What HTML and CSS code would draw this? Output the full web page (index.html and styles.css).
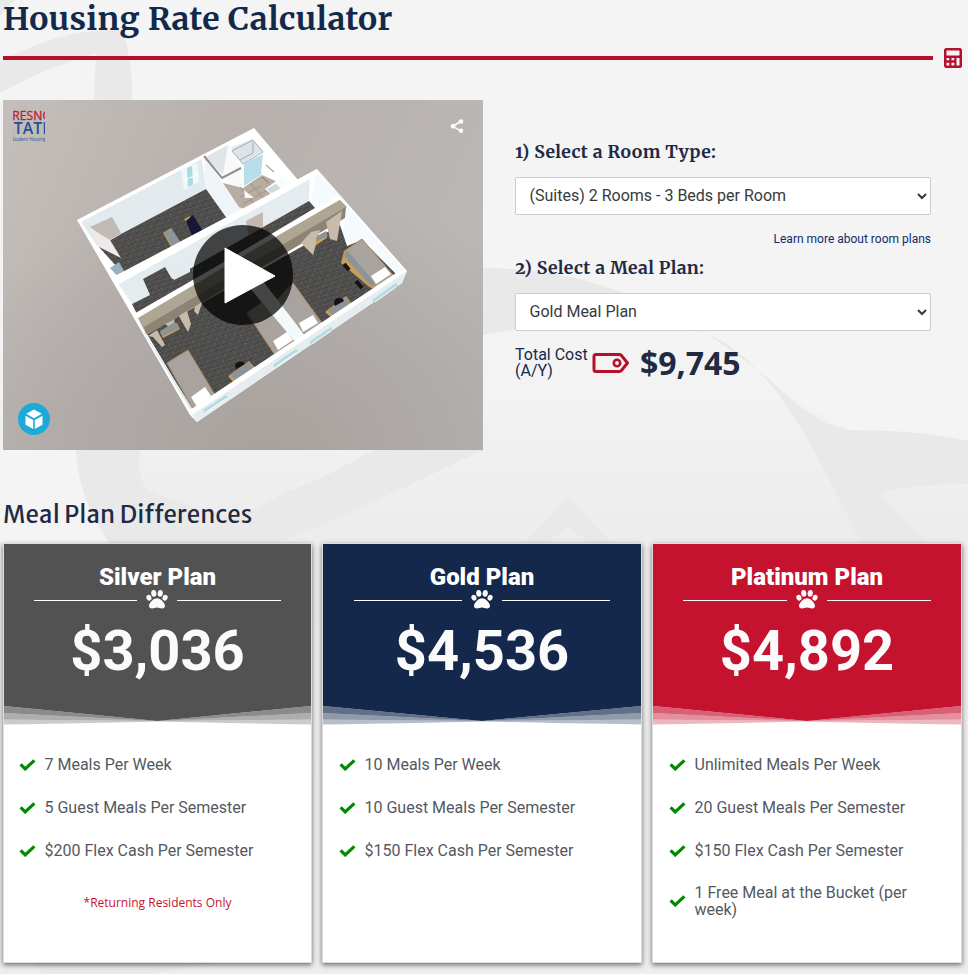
FILE: index.html
```html
<!DOCTYPE html>
<html lang="en">
<head>
<meta charset="utf-8">
<title>Housing Rate Calculator</title>
<link rel="stylesheet" href="styles.css">
</head>
<body>
<svg class="backdrop" viewBox="0 0 968 974" aria-hidden="true">
  <defs><linearGradient id="fade" x1="0" y1="0" x2="0" y2="1"><stop offset=".4" stop-color="#f3f3f3"/><stop offset=".53" stop-color="#ededed"/><stop offset="1" stop-color="#eee"/></linearGradient></defs>
  <path fill="url(#fade)" d="M0 0H968V974H0z"/>
  <path fill="#f4f4f4" d="M483 0H968V480Q850 440 770 380Q700 331 640 310L483 320zM0 0H483V100H0zM0 440H80Q78 480 108 543H0z"/>
  <g fill="#e9e9e9">
    <path d="M0 0H15Q4 8 0 18zM0 62Q60 28 122 30Q133 60 132 100H94L96 53Q45 68 0 93z"/>
    <path d="M76 450H140Q136 478 148 490Q180 505 236 518L290 490Q340 475 483 384V450Q380 500 280 543H110Q78 500 76 450z"/>
    <path d="M483 268Q560 268 621 292Q690 315 770 380Q815 425 850 430Q920 430 968 441V484Q910 484 880 493Q900 520 930 543H860Q810 435 775 390Q735 340 697 331Q590 315 483 335z"/>
    <path d="M525 543L568 497L611 543H588L568 525L548 543z"/>
    <path d="M36 963H212L150 974H42z"/>
  </g>
</svg>
<header class="page-head">
  <h1>Housing Rate Calculator</h1>
  <div class="rule"><span></span>
    <svg viewBox="0 0 18 20" width="18" height="20"><path fill="#b60f2c" fill-rule="evenodd" d="M1.5 0h15L18 1.500v17L16.500 20h-15L0 18.500v-17zM2.500 2.500v5h13v-5zM2.500 10v2.300h2.800v-2.300zm5 0v2.300h2.800v-2.300zm5 0v7.500h3v-7.500zM2.500 14.800v2.700h2.800v-2.700zm5 0v2.700h2.800v-2.700z"/></svg>
  </div>
</header>

<section class="calculator">
  <div class="viewer">
    <svg viewBox="3 100 480 350" width="480" height="350">
      <defs>
        <linearGradient id="sky" x1="0" y1="0" x2="1" y2=".3"><stop offset="0" stop-color="#c4bfbb"/><stop offset=".45" stop-color="#b7b0ad"/><stop offset="1" stop-color="#bab7b5"/></linearGradient>
        <radialGradient id="ground" cx=".55" cy="1" r=".75"><stop offset="0" stop-color="#a8a19d"/><stop offset=".5" stop-color="#aca7a5" stop-opacity=".75"/><stop offset="1" stop-color="#aca7a5" stop-opacity="0"/></radialGradient>
        <clipPath id="logo"><path d="M13 108h32v36H13z"/></clipPath>
        <pattern id="carpet" width="7" height="6" patternUnits="userSpaceOnUse" patternTransform="rotate(23)"><path fill="#4f4e4d" d="M0 0h7v6H0z"/><path fill="#62605d" d="M0 1h1v1H0zM3 0h1v1H3zM5 3h1v1H5zM2 4h2v1H2z"/><path fill="#3e3e3e" d="M1 2h1v1H1zM4 2h1v1H4zM6 5h1v1H6zM0 4h1v1H0z"/></pattern>
      </defs>
      <path fill="url(#sky)" d="M3 100h480v350H3z"/><path fill="url(#ground)" d="M3 100h480v350H3z"/>
      <path fill="#fff" d="M77 220L254 128L298 180L317 169L407 271L402 283L197 422L190 415z"/>
      <path fill="#e3eaed" d="M81 222L202 159L206 189L121 234L98 247z"/>
      <path fill="#eef4f7" d="M204 157L206 189L228 220L242 210z"/>
      <path fill="url(#carpet)" d="M121 234L206 189L228 220L126 277L99 247z"/>
      <path fill="#c3b9b5" d="M90 227L112 217L121 233L109 241z"/>
      <path fill="#eeeae9" d="M91 229L110 240L121 258L99 247z"/>
      <path fill="#eef9fa" d="M181 170L197 163L199 182L184 190z"/><path fill="#a7dbe1" d="M187 168l5-2 1 19-5 2z"/>
      <path d="M184 180l15-6" stroke="#fff"/>
      <path fill="#c49b5b" d="M163 233l8-5 12 19-9 5z"/><path fill="#8d949d" d="M164 233l8-4 10 16-8 4z"/>
      <path fill="#c49b5b" d="M184 219l6-3 3 14z"/><path fill="#17173a" d="M186 221l7-6 11 18-11 5z"/>
      <path fill="#9ab0bc" d="M110 268l9-6 8 14-7 3z"/>
      <path fill="#dfe5e8" d="M205 157L228 145L242 170L226 178z"/><path fill="#f7f9fa" d="M228 145L242 168V196L222 180z"/>
      <path d="M204 156l18 22 19-10" fill="none" stroke="#958d88" stroke-width="2"/>
      <path fill="#dbe4e8" d="M231 148L252 139L263 151L242 164z"/>
      <path d="M232 151l21-11 10 12-20 12zM240 160l13-7v-11" fill="none" stroke="#aaa"/>
      <path fill="#b9aca0" d="M223 183L243 188L262 175L289 187L248 211L239 207z"/>
      <path d="M240 197l21-11M243 204l28-16M250 183l15 17M240 187l17 20" fill="none" stroke="#928a82" stroke-width=".7"/>
      <path fill="#b7dfe9" d="M243 164L263 154L261 175L244 186z"/>
      <path fill="#f9fbfc" d="M241 165h3v25l10 8h-9zM265 189L283 176L291 185L273 196z"/><path fill="#cfd9db" d="M267 189l9-5 5 5-9 5z"/><path d="M266 165l8 7M262 177l7 6" stroke="#777"/>
      <path fill="#e5ecef" d="M118 283L310 173L309 201L172 279L165 267L143 279L150 295L132 304z"/>
      <path fill="#f5fafd" d="M317 171L310 201L315 209L341 197z"/>
      <path fill="#c4b8b0" d="M246 221l17-9v19l-14 7z"/>
      <path fill="url(#carpet)" d="M132 304L150 295L143 279L165 267L172 279L309 201L315 208L137 314z"/>
      <path fill="#e3ebee" d="M168 270l22-12v14l-16 8z"/>
      <path fill="#fff" d="M113 277L242 209L317 169L319 174L117 285z"/>
      <path fill="#f4fafd" d="M347 207L342 238L398 277L404 270z"/>
      <path fill="url(#carpet)" d="M147 334L340 225L347 246L362 240L398 276L193 411z"/>
      <path fill="#dde7e9" d="M145 334L193 409V414L140 327z"/>
      <path fill="#aea692" d="M138 318L339 199L347 207L146 334z"/><path fill="#8e8476" d="M144 327L346 207L345 218L147 335z"/>
      <path d="M136 315L339 198" stroke="#fff" stroke-width="4"/>
      <g fill="#c9bbaa"><path d="M148 336l9-6 8 15-3 2-9-10zM165 324l10-5-3 10zM179 316l8-5 4 13-3 8-7-12zM195 307l7-4-4 12-4-4zM301 243l10-11 9-2-7 25-9-9zM326 222l16-11-5 30-7-2z"/></g>
      <g fill="#c69d5c"><path d="M160 332l17-9 3 6-17 9zM316 238l10-6 1 6-11 7zM228 376l21-15 6 7-20 16zM325 312l21-16 6 8-19 15zM344 251l18-12 31 36-18 15-7-4-27-23z"/></g>
      <g fill="#8c949a"><path d="M160 331l15-9 4 6-16 8zM317 236l9-5 2 5-12 5zM230 375l19-13 4 6-18 12zM328 311l18-14 4 6-17 12zM344 256l5-4 26 30-5 3z"/></g>
      <path fill="#151212" d="M235 366q1-6 9-4l1 2-9 5zM334 303q1-7 9-4l1 2-9 5z"/>
      <g fill="#a9a39f" stroke="#b48b55"><path d="M167 363l21-13 27 45-22 14zM247 313l21-15 29 40-22 17zM275 302l18-19 29 40-16 12zM346 250l16-11 31 36-16 12z"/></g>
      <path d="M346 252l28 33" stroke="#8c949a" stroke-width="4"/><path d="M344 264l5 6M356 281l6 7" fill="none" stroke="#151212" stroke-width="4"/>
      <path fill="#f4f9fb" d="M249 287l13-7 45 58-11 5z"/>
      <g fill="#fff"><path d="M191 397l14-10 6 9-14 11zM273 341l14-9 6 8-15 10zM299 323l14-8 5 8-15 9zM371 276l14-9 6 7-15 10z"/></g>
      <path fill="#fff" d="M188 410l5-2L399 271l8 0L196 418z"/><path fill="#e5edf0" d="M192 415L407 271L402 283L197 422z"/>
      <path d="M204 411l23-15M274 366l23-16M310 343l22-15M373 301l24-17" stroke="#b5dcdf" stroke-width="3"/>
      <path d="M206 412l20-13M277 366l19-13M312 344l19-13M375 302l21-15" stroke="#f4ffff"/>
      <circle cx="243" cy="275" r="50" fill="#000" fill-opacity=".72"/><path fill="#fff" stroke="#fff" stroke-width="1" stroke-linejoin="round" d="M225 248v55l50-27z"/>
      <g clip-path="url(#logo)" class="logo"><text x="6" y="119.500" textLength="46" lengthAdjust="spacingAndGlyphs" class="logo-top">FRESNO</text><text x="5" y="133.500" textLength="46" lengthAdjust="spacingAndGlyphs" class="logo-main">STATE</text><text x="12" y="141.300" textLength="34" lengthAdjust="spacingAndGlyphs" class="logo-sub">Student Housing</text></g>
      <path d="M461 121.500l-8.500 4.800 8.500 4.500" fill="none" stroke="#fff" stroke-width="1.500"/><g fill="#fff"><circle cx="461" cy="121.500" r="2.300"/><circle cx="453" cy="126.200" r="2.300"/><circle cx="461" cy="130.800" r="2.300"/></g>
      <circle cx="34" cy="419" r="16" fill="#1caad9"/><path fill="#fff" d="M34 409.500l7.800 4.300-7.800 4.400-7.800-4.400zM25.500 415.800l7.700 4.300v8.900l-7.700-4.300zM42.500 415.800l-7.700 4.300v8.900l7.700-4.300z"/>
    </svg>
  </div>
  <form class="form">
    <h2>1) Select a Room Type:</h2>
    <select><option>(Suites) 2 Rooms - 3 Beds per Room</option></select>
    <a class="more">Learn more about room plans</a>
    <h2 class="second">2) Select a Meal Plan:</h2>
    <select><option>Gold Meal Plan</option></select>
    <div class="total">
      <span class="total-label">Total Cost<br>(A/Y)</span>
      <svg viewBox="0 0 38 22" width="38" height="22"><path fill="none" stroke="#b60f2c" stroke-width="3" stroke-linejoin="round" d="M4 2.500h23.500q1 0 1.700.7L35.500 11l-6.300 7.800q-.7.700-1.700.7H4q-2 0-2-2v-13q0-2 2-2z"/><circle cx="25" cy="11" r="3.200" fill="none" stroke="#b60f2c" stroke-width="2.600"/></svg>
      <strong>$9,745</strong>
    </div>
  </form>
</section>

<h2 class="section-title">Meal Plan Differences</h2>
<svg class="symbols" aria-hidden="true">
  <symbol id="paw" viewBox="0 0 22 19"><ellipse cx="2.900" cy="7.700" rx="2.500" ry="3" transform="rotate(-20 2.900 7.700)"/><ellipse cx="7.800" cy="3.400" rx="2.600" ry="3.400" transform="rotate(-8 7.800 3.400)"/><ellipse cx="14.200" cy="3.400" rx="2.600" ry="3.400" transform="rotate(8 14.200 3.400)"/><ellipse cx="19.100" cy="7.700" rx="2.500" ry="3" transform="rotate(20 19.100 7.700)"/><path d="M11 8.200c-3.500 0-8 4.600-8 7.800 0 1.600 1.200 2.500 3 2.500 2 0 3-1 5-1s3 1 5 1c1.800 0 3-.9 3-2.500 0-3.200-4.500-7.800-8-7.800z"/></symbol>
  <symbol id="check" viewBox="0 0 16 12"><path fill="none" stroke="#008a00" stroke-width="3.200" d="M1.100 5.300L5.700 9.900L14.900 1.300"/></symbol>
  <symbol id="divider" viewBox="0 0 100 19" preserveAspectRatio="none"><path fill="#fff" d="M0 0H100V19H0z"/><path d="M0 0L50 15L100 0z"/><path opacity=".67" d="M0 0L50 15L100 0V7L50 15L0 7z"/><path opacity=".47" d="M0 7L50 15L100 7V13.500L50 15L0 13.500z"/><path opacity=".3" d="M0 13.500L50 15L100 13.500V18.500Q70 17 50 15.500Q30 17 0 18.500z"/></symbol>
</svg>
<section class="plans">
  <article class="plan silver">
    <div class="top"><h3>Silver Plan</h3><div class="sep"><i></i><svg width="22" height="19"><use href="#paw"/></svg><i></i></div><p class="price">$3,036</p><svg class="wave"><use href="#divider"/></svg></div>
    <ul><li><svg><use href="#check"/></svg>7 Meals Per Week</li><li><svg><use href="#check"/></svg>5 Guest Meals Per Semester</li><li><svg><use href="#check"/></svg>$200 Flex Cash Per Semester</li></ul>
    <p class="note">*Returning Residents Only</p>
  </article>
  <article class="plan gold">
    <div class="top"><h3>Gold Plan</h3><div class="sep"><i></i><svg width="22" height="19"><use href="#paw"/></svg><i></i></div><p class="price">$4,536</p><svg class="wave"><use href="#divider"/></svg></div>
    <ul><li><svg><use href="#check"/></svg>10 Meals Per Week</li><li><svg><use href="#check"/></svg>10 Guest Meals Per Semester</li><li><svg><use href="#check"/></svg>$150 Flex Cash Per Semester</li></ul>
  </article>
  <article class="plan platinum">
    <div class="top"><h3>Platinum Plan</h3><div class="sep"><i></i><svg width="22" height="19"><use href="#paw"/></svg><i></i></div><p class="price">$4,892</p><svg class="wave"><use href="#divider"/></svg></div>
    <ul><li><svg><use href="#check"/></svg>Unlimited Meals Per Week</li><li><svg><use href="#check"/></svg>20 Guest Meals Per Semester</li><li><svg><use href="#check"/></svg>$150 Flex Cash Per Semester</li><li class="tall"><svg><use href="#check"/></svg>1 Free Meal at the Bucket (per week)</li></ul>
  </article>
</section>
</body>
</html>
```
FILE: styles.css
```css
* { box-sizing: border-box; }
body { margin: 0; padding: 0 6px 0 3px; height: 974px; overflow: hidden; position: relative; background: #f3f3f3; font-family: Roboto, sans-serif; color: #13294b; }
h1, h2, h3, p, ul { margin: 0; padding: 0; }
.backdrop { position: absolute; left: 0; top: 0; width: 968px; height: 974px; z-index: -1; }
.symbols { display: none; }

.page-head { height: 100px; }
h1 { height: 48px; font: 700 32px/38px "Merriweather", "DejaVu Serif", serif; letter-spacing: .45px; white-space: nowrap; }
.rule { display: flex; align-items: center; gap: 11px; height: 20px; }
.rule span { width: 930px; height: 4px; background: #b60f2c; }

.calculator { display: flex; gap: 32px; height: 350px; }
.viewer, .viewer svg { display: block; width: 480px; height: 350px; }
.logo { font-family: "Open Sans", sans-serif; }
.logo-top { font-size: 12.500px; font-weight: 400; fill: #bd2036; stroke: #bd2036; stroke-width: .3px; }
.logo-main { font-size: 17px; font-weight: 600; fill: #24509a; }
.logo-sub { font-size: 4.500px; fill: #24509a; }

.form { width: 416px; padding-top: 38px; }
.form h2 { height: 39px; font: 700 17.600px/28px "Merriweather", "DejaVu Serif", serif; font-variant-numeric: oldstyle-nums; letter-spacing: .36px; color: #1f2a44; white-space: nowrap; }
.form select { display: block; width: 416px; height: 38px; padding: 5px 0 7px 9.500px; border: 1px solid #ccc; border-radius: 2px; background: #fff; font: 400 16px/24px Roboto, sans-serif; color: #373a3c; }
.more { display: block; height: 39px; padding-top: 14px; font-size: 12px; line-height: 20px; text-align: right; color: #13296b; }
.total { display: flex; align-items: center; height: 64px; }
.total-label { width: 77px; font-size: 16px; line-height: 16px; white-space: nowrap; }
.total svg { margin-right: 10px; }
.total strong { font: 700 32px/40px "Open Sans", sans-serif; color: #1f2a44; }

.section-title { height: 94px; padding-top: 47px; font: 500 24px/36px "Merriweather Sans", "Open Sans", sans-serif; letter-spacing: .12px; color: #1f2a44; white-space: nowrap; }
.plans { display: grid; grid-template-columns: 309px 320px 310px; gap: 10px; margin-top: -1px; height: 420px; }
.plan { border: 1px solid #ddd; background: #fff; box-shadow: 0 2px 5px rgba(0, 0, 0, .55); }
.silver { --tone: #525252; }
.gold { --tone: #14284c; }
.platinum { --tone: #c4122f; }
.top { height: 181px; padding-top: 19px; display: flex; flex-direction: column; align-items: center; background: var(--tone); color: #fff; }
.top h3 { font-size: 24px; font-weight: 900; line-height: 28px; height: 27px; }
.sep { width: 80.3%; height: 21px; display: flex; align-items: center; justify-content: space-between; }
.sep i { width: calc(50% - 20px); height: 1px; background: #fff; }
.sep svg { fill: #fbfbfb; margin-bottom: 2px; }
.price { margin-top: 4px; font-size: 56px; font-weight: 700; line-height: 72px; color: #fbfbfb; }
.wave { display: block; width: 100%; height: 19px; margin-top: auto; fill: var(--tone); }
ul { list-style: none; padding: 18px 16px 0 15px; }
.gold ul, .platinum ul { padding-left: 16px; }
li { display: flex; align-items: center; height: 43px; font-size: 16px; line-height: 17px; color: #54595f; }
li.tall { height: 58px; }
li svg { flex: none; width: 17px; height: 12px; margin-right: 8.500px; }
.note { margin-top: 21px; text-align: center; font: 400 12px/20px "Open Sans", sans-serif; color: #c4122f; }
```
